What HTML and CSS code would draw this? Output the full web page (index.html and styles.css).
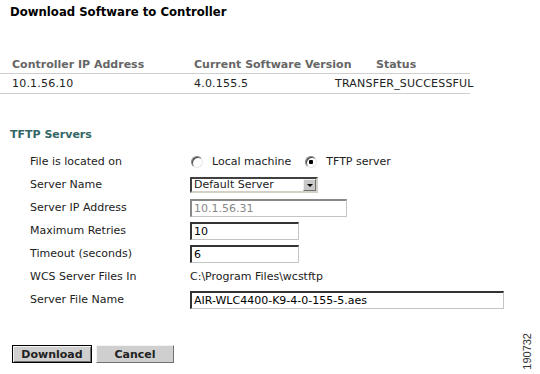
FILE: index.html
```html
<!DOCTYPE html>
<html>
<head>
    <title>Download Software to Controller</title>
    <link rel="stylesheet" href="styles.css">
</head>
<body>

    <div class="page">
        <h1 class="page-title">Download Software to Controller</h1>

        <table class="status-table">
            <thead>
                <tr>
                    <th class="col-ip">Controller IP Address</th>
                    <th class="col-version">Current Software Version</th>
                    <th class="col-status">Status</th>
                </tr>
            </thead>
            <tbody>
                <tr>
                    <td>10.1.56.10</td>
                    <td>4.0.155.5</td>
                    <td>TRANSFER_SUCCESSFUL</td>
                </tr>
            </tbody>
        </table>

        <h3 class="section-title">TFTP Servers</h3>

        <form class="tftp-form">
            <div class="form-row">
                <span class="form-label">File is located on</span>
                <label class="radio-option"><input type="radio" name="location" class="radio"> Local machine</label>
                <label class="radio-option"><input type="radio" name="location" class="radio" checked> TFTP server</label>
            </div>
            <div class="form-row">
                <span class="form-label">Server Name</span>
                <div class="select-box">
                    <span class="select-value">Default Server</span>
                    <span class="select-arrow"></span>
                </div>
            </div>
            <div class="form-row">
                <span class="form-label">Server IP Address</span>
                <input type="text" class="text-input input-medium" value="10.1.56.31" disabled>
            </div>
            <div class="form-row">
                <span class="form-label">Maximum Retries</span>
                <input type="text" class="text-input input-short" value="10">
            </div>
            <div class="form-row">
                <span class="form-label">Timeout (seconds)</span>
                <input type="text" class="text-input input-short" value="6">
            </div>
            <div class="form-row">
                <span class="form-label">WCS Server Files In</span>
                <span class="form-value">C:\Program Files\wcstftp</span>
            </div>
            <div class="form-row">
                <span class="form-label">Server File Name</span>
                <input type="text" class="text-input input-long" value="AIR-WLC4400-K9-4-0-155-5.aes">
            </div>

            <div class="actions">
                <button type="submit" class="btn btn-default">Download</button>
                <button type="button" class="btn">Cancel</button>
            </div>
        </form>

        <div class="fig-number">190732</div>
    </div>

</body>
</html>
```

FILE: styles.css
```css
body {
    margin: 0;
    padding: 0;
    font-family: "DejaVu Sans", Verdana, sans-serif;
    font-size: 11px;
    color: #222;
    background-color: #ffffff;
}

.page {
    position: relative;
    width: 540px;
    height: 374px;
}

.page-title {
    margin: 0;
    padding-left: 10px;
    font-size: 11.7px;
    line-height: 24px;
    color: #000;
}


/* status table */

.status-table {
    margin-top: 31px;
    width: 470px;
    border-collapse: collapse;
    table-layout: fixed;
}

.status-table th,
.status-table td {
    padding: 0 0 0 12px;
    text-align: left;
    white-space: nowrap;
    border-bottom: 1px solid #cfcfcf;
}

.status-table th {
    height: 18px;
    color: #666;
    font-size: 11px;
}

.status-table td {
    height: 19px;
    letter-spacing: 0.2px;
}

.status-table .col-ip {
    width: 170px;
}

.status-table .col-version {
    width: 129px;
}

.status-table .col-status {
    padding-left: 53px;
}


/* tftp form */

.section-title {
    margin: 31px 0 5px;
    padding-left: 10px;
    font-size: 11px;
    line-height: 20px;
    color: #336666;
}

.form-row {
    display: flex;
    align-items: center;
    height: 23px;
    padding-left: 30px;
}

.form-label {
    width: 160px;
    flex-shrink: 0;
}

.radio-option {
    display: flex;
    align-items: center;
    margin-right: 13px;
}

.radio {
    appearance: none;
    width: 12px;
    height: 12px;
    margin: 0 9px 0 1px;
    border-radius: 50%;
    background-color: #fff;
    border: 1px solid;
    border-color: #808080 #e8e8e8 #e8e8e8 #808080;
    box-shadow: inset 1px 1px 0 #404040;
}

.radio:checked {
    background: radial-gradient(circle, #000 0 2px, #fff 2.5px);
}

.select-box {
    display: flex;
    align-items: center;
    justify-content: space-between;
    width: 128px;
    height: 16px;
    box-sizing: border-box;
    border: 2px solid;
    border-color: #404040 #d4d0c8 #d4d0c8 #404040;
    background-color: #fff;
}

.select-value {
    padding-left: 2px;
}

.select-arrow {
    position: relative;
    width: 13px;
    height: 12px;
    box-sizing: border-box;
    background-color: #c8c8c8;
    border: 1px solid;
    border-color: #f0f0f0 #707070 #707070 #f0f0f0;
}

.select-arrow::after {
    content: "";
    position: absolute;
    left: 3px;
    top: 4px;
    border-left: 3px solid transparent;
    border-right: 3px solid transparent;
    border-top: 3px solid #000;
}

.text-input {
    height: 18px;
    box-sizing: border-box;
    padding: 0 2px;
    font-family: "DejaVu Sans", Verdana, sans-serif;
    font-size: 11px;
    color: #000;
    background-color: #fff;
    border: 2px solid;
    border-color: #333 #c4c4c4 #c4c4c4 #333;
    border-right-width: 1px;
    border-bottom-width: 1px;
    outline: none;
}

.text-input:disabled {
    color: #888;
    border-color: #888 #c4c4c4 #c4c4c4 #888;
}

.input-medium {
    width: 157px;
}

.input-short {
    width: 109px;
}

.input-long {
    width: 314px;
}

.form-value {
    color: #222;
}


/* buttons */

.actions {
    display: flex;
    gap: 4px;
    margin-top: 34px;
    padding-left: 12px;
}

.btn {
    width: 78px;
    height: 18px;
    padding: 0;
    font-family: "DejaVu Sans", Verdana, sans-serif;
    font-size: 11px;
    font-weight: bold;
    color: #222;
    background-color: #cfcfcf;
    border: 1px solid;
    border-color: #f4f4f4 #707070 #707070 #f4f4f4;
    cursor: pointer;
}

.btn-default {
    width: 80px;
    border: 1px solid #000;
    box-shadow: inset 1px 1px 0 #f4f4f4, inset -1px -1px 0 #707070;
}


/* figure number */

.fig-number {
    position: absolute;
    right: 7px;
    bottom: 4px;
    writing-mode: vertical-rl;
    transform: rotate(180deg);
    font-family: "Liberation Sans", Arial, sans-serif;
    font-size: 11px;
    color: #333;
}
```
